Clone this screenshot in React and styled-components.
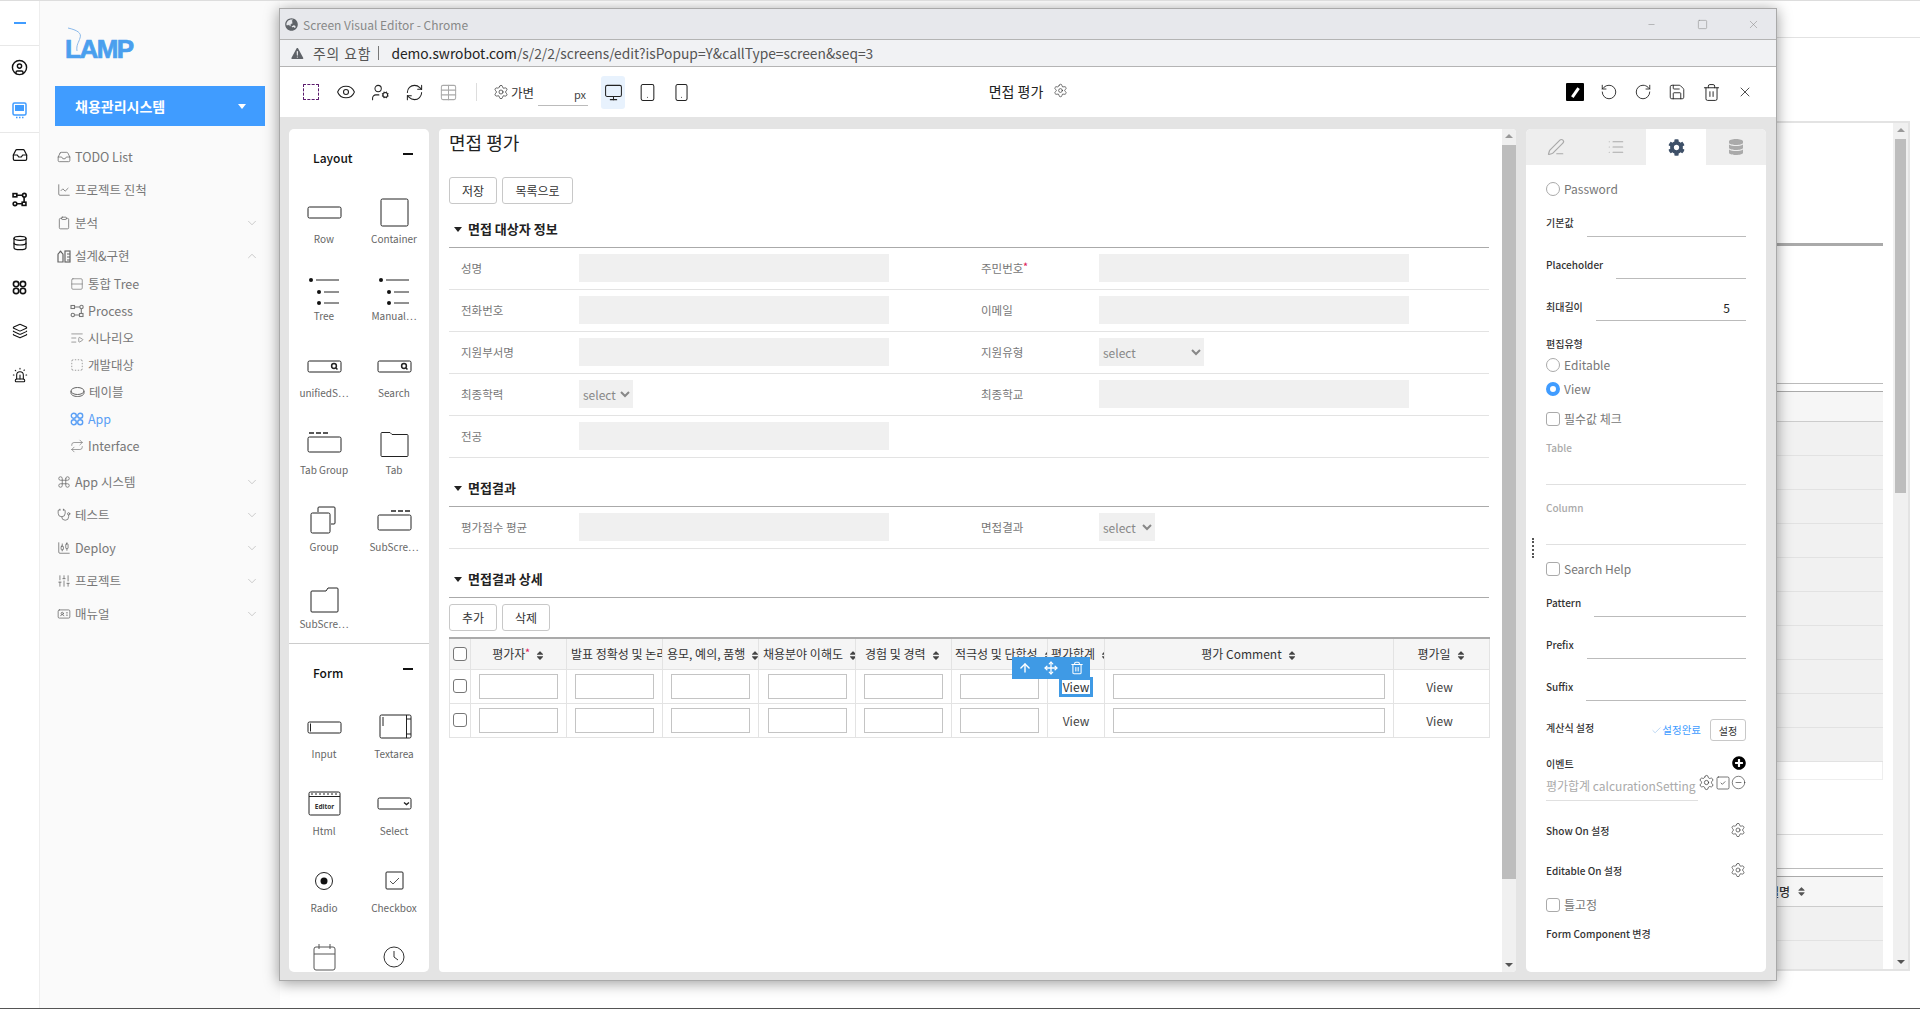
import React from "react";
import styled, { createGlobalStyle } from "styled-components";
import {
  CircleUser, Inbox, Database, Layers, Siren, ChartLine, Clipboard, Rows2,
  ListVideo, SquareDashed, Repeat, Command, Stethoscope, ChartCandlestick, SlidersVertical, IdCard,
  ChevronDown, ChevronUp, Eye, UserCog, RefreshCw, Table, Settings, Monitor, Tablet, Smartphone,
  RotateCcw, RotateCw, Save, Trash2, X, Minus, Square, ArrowUp, Move, SquareCheck, CircleMinus,
  PenLine, List, Check,
} from "lucide-react";
import { FaCog, FaDatabase, FaGlobeAsia, FaSort, FaPlusCircle } from "react-icons/fa";
import { IoWarning } from "react-icons/io5";

const FONT = `"Noto Sans CJK KR", "Noto Sans", sans-serif`;

const GlobalStyle = createGlobalStyle`
  html, body { margin: 0; padding: 0; height: 1009px; overflow: hidden; background: #fff; }
  body { font-family: ${FONT}; color: #333; }
  * { box-sizing: border-box; }
  input, select, button { font-family: ${FONT}; }
`;

const Page = styled.div`
  position: relative;
  display: flex;
  width: 1920px;
  height: 1009px;
  border-top: 1px solid #ddd;
  border-bottom: 1px solid #555;
  overflow: hidden;
`;

/* left icon rail */
const Rail = styled.nav`
  width: 40px;
  flex: none;
  border-right: 1px solid #eee;
  background: #fff;
`;
const RailTop = styled.div`
  height: 45px;
  display: flex;
  align-items: center;
  justify-content: center;
  border-bottom: 1px solid #e8e8e8;
`;
const RailDash = styled.span`
  width: 12px;
  height: 2px;
  background: #409cff;
`;
const RailGroup = styled.div`
  height: 87px;
  border-bottom: 1px solid #e8e8e8;
`;
const RailItem = styled.div`
  height: ${(p) => (p.$tall ? 44 : 43)}px;
  display: flex;
  align-items: center;
  justify-content: center;
  color: ${(p) => (p.$active ? "#409cff" : "#111")};
`;

/* sidebar */
const Sidebar = styled.aside`
  width: 240px;
  flex: none;
  background: #fafafa;
`;
const LogoRow = styled.div`
  height: 85px;
  padding: 26px 0 0 25px;
`;
const Logo = styled.div`
  position: relative;
  width: 72px;
  height: 36px;
  padding-top: 9px;
  font: 900 26px/26px "Liberation Sans", sans-serif;
  letter-spacing: -1.5px;
  color: #4a9fee;
  -webkit-text-stroke: 0.7px #4a9fee;
  svg { position: absolute; left: 0; top: 0; }
`;
const SystemButton = styled.div`
  height: 40px;
  margin: 0 15px;
  padding: 0 19px 0 20px;
  display: flex;
  align-items: center;
  justify-content: space-between;
  background: #409cff;
  color: #fff;
  font-size: 14px;
  font-weight: 700;
`;
const Caret = styled.span`
  border-left: 4px solid transparent;
  border-right: 4px solid transparent;
  border-top: 5px solid #fff;
`;
const Menu = styled.div`
  margin-top: 14px;
`;
const MenuRow = styled.div`
  height: 33px;
  padding: 0 21px 0 17px;
  display: flex;
  align-items: center;
  gap: 4px;
  font-size: 12.5px;
  color: #777;
  svg:first-child { flex: none; color: #666; }
  span { flex: 1; }
`;
const SubMenu = styled.div`
  margin-top: -2px;
  padding-bottom: 6px;
`;
const SubRow = styled.div`
  height: 27px;
  padding-left: 30px;
  display: flex;
  align-items: center;
  gap: 4px;
  font-size: 12.5px;
  color: ${(p) => (p.$active ? "#5a9ff5" : "#777")};
  svg { flex: none; }
`;

/* page behind the popup */
const Main = styled.main`
  flex: 1;
  min-width: 0;
`;
const MainTop = styled.div`
  height: 37px;
  border-bottom: 1px solid #e2e2e2;
`;
const BackBox = styled.div`
  display: flex;
  height: 850px;
  margin: 83px 10px 0 0;
  border: 2px solid #e3e3e3;
  border-left: 0;
`;
const BackContent = styled.div`
  flex: 1;
  padding: 120px 10px 0 0;
  overflow: hidden;
`;
const BackRule = styled.div`
  height: ${(p) => p.$h || 1}px;
  margin-top: ${(p) => p.$top || 0}px;
  background: ${(p) => p.$color || "#bbb"};
`;
const BackHead = styled.div`
  height: 31px;
  padding-left: 1488px;
  display: flex;
  align-items: center;
  gap: 6px;
  background: #f6f6f6;
  border-top: 1px solid #aaa;
  border-bottom: 1px solid #ccc;
  font-size: 12px;
  font-weight: 500;
  svg { width: 11px; height: 11px; color: #555; }
`;
const BackRow = styled.div`
  height: 34px;
  background: #f1f1f1;
  border-bottom: 1px solid #e2e2e2;
`;
const WhiteRow = styled.div`
  height: 18px;
  border-bottom: 1px solid #eee;
  border-right: 1px solid #eee;
`;
const ScrollTrack = styled.div`
  position: relative;
  width: ${(p) => p.$w || 15}px;
  flex: none;
  padding: 16px ${(p) => p.$pad || 0}px;
  background: #f0f0f0;
`;
const ScrollThumb = styled.div`
  height: ${(p) => p.$h}px;
  background: #bdbdbd;
`;
const ScrollArrow = styled.span`
  position: absolute;
  left: 50%;
  margin-left: -4px;
  ${(p) => (p.$down ? "bottom: 5px;" : "top: 5px;")}
  border-left: 4px solid transparent;
  border-right: 4px solid transparent;
  ${(p) => (p.$down ? "border-top: 4px solid #555;" : "border-bottom: 4px solid #999;")}
`;

/* popup window */
const PopupWindow = styled.section`
  position: absolute;
  left: 279px;
  top: 7px;
  width: 1498px;
  height: 973px;
  display: flex;
  flex-direction: column;
  border: 1px solid #a9a9a9;
  background: #e4e4e4;
  box-shadow: 0 2px 14px rgba(0, 0, 0, 0.4);
`;
const TitleBar = styled.div`
  height: 31px;
  flex: none;
  padding-left: 5px;
  display: flex;
  align-items: center;
  gap: 5px;
  background: #e7e8ec;
  border-bottom: 1px solid #b4b4b4;
  color: #888;
  svg { flex: none; }
`;
const TitleText = styled.span`
  flex: 1;
  font-size: 12px;
  color: #888;
`;
const WindowButton = styled.span`
  width: 46px;
  display: flex;
  justify-content: center;
  color: #888;
`;
const AddressBar = styled.div`
  height: 27px;
  flex: none;
  padding-left: 10px;
  display: flex;
  align-items: center;
  background: #f1f2f4;
  border-bottom: 1px solid #b4b4b4;
  font-size: 13.8px;
  color: #555;
`;
const Warn = styled.span`
  display: flex;
  margin-right: 8px;
  color: #5f6368;
`;
const WarnText = styled.span`
  letter-spacing: 0.9px;
`;
const AddressDivider = styled.span`
  width: 1px;
  height: 14px;
  margin: 0 12px 0 7px;
  background: #777;
`;
const UrlHost = styled.span`
  color: #222;
`;
const Toolbar = styled.div`
  height: 51px;
  flex: none;
  padding: 0 14px 0 15px;
  display: flex;
  align-items: center;
  background: #fff;
  border-bottom: 1px solid #e4e4e4;
`;
const ToolSide = styled.div`
  flex: 1;
  display: flex;
  align-items: center;
  justify-content: ${(p) => (p.$right ? "flex-end" : "flex-start")};
`;
const ToolButton = styled.span`
  width: 34px;
  height: 34px;
  display: flex;
  align-items: center;
  justify-content: center;
  color: ${(p) => p.$color || "#222"};
`;
const DashedBox = styled.span`
  width: 16px;
  height: 16px;
  margin-left: -2px;
  border: 1px dashed #5a1a6c;
  border-radius: 1px;
`;
const ToolDivider = styled.span`
  width: 1px;
  height: 18px;
  margin: 0 16px 0 11px;
  background: #ddd;
`;
const SizeLabel = styled.span`
  display: flex;
  align-items: center;
  gap: 2px;
  font-size: 12.5px;
  color: #333;
`;
const SizeInput = styled.span`
  width: 50px;
  height: 24px;
  margin: 4px 8px 0 4px;
  padding-right: 2px;
  display: flex;
  align-items: center;
  justify-content: flex-end;
  border-bottom: 1px solid #bbb;
  font-size: 11px;
  color: #444;
`;
const DeviceButton = styled.span`
  width: 24px;
  height: 33px;
  margin: 0 5px;
  border-radius: 3px;
  display: flex;
  align-items: center;
  justify-content: center;
  background: ${(p) => (p.$active ? "#e8f2fd" : "transparent")};
  color: #222;
`;
const ToolTitle = styled.div`
  display: flex;
  align-items: center;
  gap: 10px;
  margin-top: -3px;
  font-size: 14px;
  color: #222;
`;
const PencilSquare = styled.span`
  width: 18px;
  height: 18px;
  display: flex;
  align-items: center;
  justify-content: center;
  background: #000;
  border-radius: 1px;
  i {
    width: 2.5px;
    height: 11px;
    background: #fff;
    transform: rotate(35deg);
  }
`;

const Workspace = styled.div`
  flex: 1;
  min-height: 0;
  padding: 11px 10px 8px 9px;
  display: flex;
  gap: 10px;
`;

/* component palette */
const Palette = styled.div`
  width: 140px;
  flex: none;
  background: #fff;
  border-radius: 5px;
  overflow: hidden;
`;
const PaletteSection = styled.div`
  border-bottom: ${(p) => (p.$line ? "1px solid #ccc" : "0")};
`;
const PaletteHead = styled.div`
  height: 63px;
  padding: 0 16px 7px 24px;
  display: flex;
  align-items: center;
  justify-content: space-between;
  font-size: 12px;
  font-weight: 500;
  color: #111;
  i {
    width: 10px;
    height: 2px;
    margin-top: -6px;
    background: #111;
  }
`;
const PaletteGrid = styled.div`
  display: grid;
  grid-template-columns: 70px 70px;
  grid-auto-rows: 77px;
  ${(p) => (p.$h ? `height: ${p.$h}px;` : "")}
`;
const PaletteItem = styled.div`
  display: flex;
  flex-direction: column;
  align-items: center;
  font-size: 10px;
  color: #666;
  white-space: nowrap;
`;
const GlyphBox = styled.div`
  height: 40px;
  display: flex;
  align-items: center;
  justify-content: center;
`;
const PaletteLabel = styled.div`
  height: 16px;
  margin-top: -1px;
  line-height: 16px;
`;

const glyphs = {
  row: <rect x="1" y="12" width="33" height="11" rx="1.5" />,
  container: <rect x="4" y="4" width="27" height="27" rx="1.5" />,
  tree: (
    <g>
      <circle cx="4" cy="8" r="2" fill="#111" stroke="none" />
      <path d="M9 8h23M17 20h15" />
      <circle cx="12" cy="20" r="2" fill="#111" stroke="none" />
      <circle cx="12" cy="31" r="2" fill="#111" stroke="none" />
      <path d="M17 31h15" />
    </g>
  ),
  search: (
    <g>
      <rect x="1" y="12" width="33" height="11" rx="1.5" />
      <circle cx="27" cy="17" r="2.4" strokeWidth="1.5" />
      <path d="M29 19l1.5 1.5" strokeWidth="1.5" />
    </g>
  ),
  tabGroup: (
    <g>
      <path d="M2 7h5M9 7h5M16 7h5" strokeWidth="1.6" />
      <rect x="1" y="11" width="33" height="15" rx="1.5" />
    </g>
  ),
  tab: <path d="M4 7.5a1 1 0 0 1 1-1h8l2 2h15a1 1 0 0 1 1 1v20a1 1 0 0 1-1 1H5a1 1 0 0 1-1-1z" />,
  group: (
    <g>
      <path d="M11 9V5a1 1 0 0 1 1-1h15a1 1 0 0 1 1 1v15a1 1 0 0 1-1 1h-3" />
      <rect x="4" y="10" width="19" height="20" rx="1.5" />
    </g>
  ),
  subTab: (
    <g>
      <path d="M14 8h5M21 8h5M28 8h5" strokeWidth="1.6" />
      <rect x="1" y="12" width="33" height="15" rx="1.5" />
    </g>
  ),
  subFolder: <path d="M4 12a1 1 0 0 1 1-1h14l2-3h9a1 1 0 0 1 1 1v22a1 1 0 0 1-1 1H5a1 1 0 0 1-1-1z" />,
  input: (
    <g>
      <rect x="1" y="12" width="33" height="11" rx="1.5" />
      <path d="M3.5 13.5v8" />
    </g>
  ),
  textarea: (
    <g>
      <rect x="3" y="5" width="31" height="23" rx="1.5" />
      <path d="M29.5 5v23M29.5 9h4.500M29.500 24h4.500M6 7v9" />
    </g>
  ),
  html: (
    <g>
      <rect x="2" y="5" width="31" height="23" rx="1.5" />
      <path d="M2 9.500h31" />
      <path d="M4 7h28" strokeDasharray="2 2" />
    </g>
  ),
  select: (
    <g>
      <rect x="1" y="11" width="33" height="11" rx="1.500" />
      <path d="M27 15.500l2.500 2 2.500-2" strokeWidth="1.400" />
    </g>
  ),
  radio: (
    <g>
      <circle cx="17" cy="17" r="8.500" />
      <circle cx="17" cy="17" r="3.500" fill="#111" stroke="none" />
    </g>
  ),
  checkbox: (
    <g>
      <rect x="9" y="8" width="17" height="17" rx="1" />
      <path d="M13 17l3 3 6-6" stroke="#555" />
    </g>
  ),
  date: (
    <g stroke="#555">
      <rect x="7" y="6" width="21" height="23" rx="2" />
      <path d="M7 13h21M12 3v5M23 3v5" />
    </g>
  ),
  time: (
    <g stroke="#333">
      <circle cx="17" cy="16" r="10" />
      <path d="M17 10v6l4 3" />
    </g>
  ),
};

const Glyph = ({ kind }) => (
  <GlyphBox>
    <svg width="35" height="35" viewBox="0 0 35 35" fill="none" stroke="#222" strokeWidth="1">
      {glyphs[kind]}
      {kind === "html" && (
        <text x="17.500" y="22" textAnchor="middle" fontSize="6.500" fontWeight="700" stroke="none" fill="#333" fontFamily="Noto Sans, sans-serif">
          Editor
        </text>
      )}
    </svg>
  </GlyphBox>
);

const layoutItems = [
  ["row", "Row"], ["container", "Container"], ["tree", "Tree"], ["tree", "Manual⋯"],
  ["search", "unifiedS⋯"], ["search", "Search"], ["tabGroup", "Tab Group"], ["tab", "Tab"],
  ["group", "Group"], ["subTab", "SubScre⋯"], ["subFolder", "SubScre⋯"],
];
const formItems = [
  ["input", "Input"], ["textarea", "Textarea"], ["html", "Html"], ["select", "Select"],
  ["radio", "Radio"], ["checkbox", "Checkbox"], ["date"], ["time"],
];

/* center editor */
const Editor = styled.div`
  flex: 1;
  min-width: 0;
  display: flex;
  background: #fff;
  border-radius: 4px;
  overflow: hidden;
`;
const EditorBody = styled.div`
  flex: 1;
  min-width: 0;
  padding: 0 13px 0 10px;
`;
const PageTitle = styled.h1`
  margin: 0;
  height: 26px;
  font-size: 18px;
  font-weight: 400;
  line-height: 26px;
  color: #222;
`;
const Buttons = styled.div`
  display: flex;
  gap: 5px;
  margin-top: ${(p) => p.$top}px;
`;
const Btn = styled.button`
  height: 27px;
  width: ${(p) => p.$w}px;
  padding: 0;
  background: #fff;
  border: 1px solid #c8c8c8;
  border-radius: 3px;
  font-size: 12px;
  color: #333;
`;
const SectionHead = styled.h2`
  margin: 0;
  padding: ${(p) => (p.$first ? 16 : 21)}px 0 9px 5px;
  display: flex;
  align-items: center;
  gap: 6px;
  border-bottom: 1px solid #aaa;
  font-size: 13px;
  font-weight: 700;
  line-height: 18px;
  color: #222;
  &::before {
    content: "";
    border-left: 4px solid transparent;
    border-right: 4px solid transparent;
    border-top: 5px solid #222;
  }
`;
const FormRow = styled.div`
  height: 42px;
  display: flex;
  align-items: center;
  border-bottom: 1px solid #e3e3e3;
  padding-bottom: 1px;
`;
const Field = styled.div`
  width: 520px;
  flex: none;
  display: grid;
  grid-template-columns: 130px 310px;
  align-items: center;
`;
const FieldLabel = styled.label`
  padding-left: 12px;
  font-size: 11.5px;
  color: #777;
  b {
    color: #e0245e;
    font-weight: 700;
    font-size: 9px;
    vertical-align: 3px;
  }
`;
const GrayInput = styled.input`
  height: 28px;
  width: 100%;
  border: 0;
  outline: 0;
  background: #f0f0f0;
`;
const GraySelect = styled.select`
  height: 28px;
  width: ${(p) => p.$w}px;
  border: 0;
  outline: 0;
  background-color: #f0f0f0;
  font-size: 12px;
  color: #888;
`;

const GridTable = styled.table`
  width: 1040px;
  margin: 6px 0 0 0;
  border-collapse: collapse;
  table-layout: fixed;
`;
const Col = styled.col`
  width: ${(p) => p.$w}px;
`;
const Th = styled.th`
  height: 31px;
  padding: 0 0 0 ${(p) => p.$pad || 0}px;
  background: #f5f5f5;
  border: 1px solid #e3e3e3;
  border-top: 2px solid #aaa;
  font-size: 12px;
  font-weight: 400;
  color: #333;
  white-space: nowrap;
  overflow: hidden;
  text-align: ${(p) => (p.$left ? "left" : "center")};
  b {
    color: #e0245e;
    font-size: 9px;
    vertical-align: 3px;
  }
  svg {
    width: 10px;
    height: 11px;
    margin-left: 5px;
    vertical-align: -1.5px;
    color: #444;
  }
`;
const Td = styled.td`
  position: relative;
  height: 34px;
  padding: 0 ${(p) => p.$endPad || 0}px 0 0;
  border: 1px solid #e3e3e3;
  text-align: center;
  font-size: 12px;
  color: #444;
`;
const CellInput = styled.input`
  display: block;
  width: ${(p) => p.$w || 79}px;
  height: 25px;
  margin: 0 auto;
  border: 1px solid #c4c4c4;
  outline: 0;
  background: #fff;
`;
const Check14 = styled.input.attrs({ type: "checkbox" })`
  appearance: none;
  display: block;
  width: 14px;
  height: 14px;
  margin: ${(p) => (p.$flat ? "0" : "0 auto")};
  border: 1px solid ${(p) => (p.$flat ? "#aaa" : "#777")};
  border-radius: 3px;
  background: #fff;
  flex: none;
`;
const SelectToolbar = styled.div`
  position: absolute;
  left: -36px;
  top: -13px;
  width: 78px;
  height: 22px;
  display: flex;
  align-items: center;
  justify-content: space-around;
  background: #3f9ae5;
  color: #fff;
  z-index: 2;
`;
const SelectedText = styled.span`
  position: relative;
  z-index: 1;
  display: inline-block;
  padding: 0 1px;
  height: 14px;
  line-height: 14px;
  background: #fff;
  outline: 3px solid #3f9ae5;
  color: #333;
`;

/* property panel */
const Props = styled.div`
  position: relative;
  width: 240px;
  flex: none;
  background: #fff;
  border-radius: 5px;
  overflow: hidden;
`;
const TabRow = styled.div`
  height: 36px;
  display: flex;
  background: #eee;
`;
const PropTab = styled.div`
  flex: 1;
  display: flex;
  align-items: center;
  justify-content: center;
  background: ${(p) => (p.$active ? "#fff" : "transparent")};
  color: ${(p) => (p.$active ? "#3e5068" : "#aaa")};
`;
const Dots = styled.span`
  position: absolute;
  left: 6px;
  top: 409px;
  width: 2px;
  height: 20px;
  border-left: 2px dotted #555;
`;
const PropBody = styled.div`
  height: 789px;
  padding: 14px 20px 0;
  overflow: hidden;
`;
const OptionRow = styled.label`
  height: 20px;
  margin-top: ${(p) => p.$top || 0}px;
  display: flex;
  align-items: center;
  gap: 4px;
  font-size: 12px;
  color: #777;
  span { margin-top: -2px; }
`;
const Radio = styled.input.attrs({ type: "radio" })`
  appearance: none;
  width: 14px;
  height: 14px;
  margin: 0;
  flex: none;
  border-radius: 50%;
  border: 1px solid #aaa;
  background: #fff;
  &:checked {
    border: 4px solid #409cff;
  }
`;
const InputRow = styled.div`
  height: 26px;
  margin-top: ${(p) => p.$top ?? 16}px;
  display: flex;
  align-items: flex-start;
  gap: 13px;
  line-height: 23px;
`;
const PropLabel = styled.span`
  flex: none;
  font-size: 10px;
  font-weight: 500;
  color: ${(p) => (p.$muted ? "#aaa" : "#333")};
`;
const LineInput = styled.div`
  flex: 1;
  height: 26px;
  padding-right: 16px;
  line-height: 26px;
  border-bottom: 1px solid #bbb;
  text-align: right;
  font-size: 12px;
  color: #222;
`;
const BlockLabel = styled.div`
  height: 16px;
  line-height: ${(p) => p.$lh || 12}px;
  margin-top: ${(p) => p.$top}px;
`;
const BlockLine = styled.div`
  height: 29px;
  border-bottom: 1px solid #e0e0e0;
`;
const CalcRow = styled.div`
  height: 22px;
  margin-top: 18px;
  display: flex;
  align-items: center;
  line-height: 18px;
  ${PropLabel} { align-self: flex-start; }
`;
const Done = styled.span`
  margin-left: auto;
  margin-right: 9px;
  display: flex;
  align-items: center;
  font-size: 10.5px;
  color: #409cff;
`;
const SmallBtn = styled.button`
  width: 36px;
  height: 22px;
  padding: 0;
  background: #fff;
  border: 1px solid #c8c8c8;
  border-radius: 3px;
  font-size: 10px;
  color: #333;
`;
const EventHead = styled.div`
  height: 16px;
  margin-top: 14px;
  display: flex;
  align-items: center;
  justify-content: space-between;
  svg { color: #000; }
`;
const EventRow = styled.div`
  height: 30px;
  display: flex;
  align-items: flex-start;
`;
const EventInput = styled.div`
  width: 152px;
  height: 30px;
  line-height: 30px;
  border-bottom: 1px solid #e0e0e0;
  font-size: 12px;
  color: #aaa;
  white-space: nowrap;
  overflow: hidden;
`;
const EventIcons = styled.div`
  flex: 1;
  padding-top: 3px;
  display: flex;
  justify-content: flex-end;
  align-items: center;
  color: #333;
`;
const SettingRow = styled.div`
  height: 20px;
  margin-top: ${(p) => p.$top}px;
  display: flex;
  align-items: center;
  justify-content: space-between;
  svg { color: #333; }
`;

const columns = [21, 96, 96, 96, 97, 96, 96, 57, 289, 96];

const I = ({ as: Comp, size = 14, sw = 1.5, ...rest }) => <Comp size={size} strokeWidth={sw} {...rest} />;

const GridCircles = ({ size = 14, color = "currentColor", sw = 1.4 }) => (
  <svg width={size} height={size} viewBox="0 0 14 14" fill="none" stroke={color} strokeWidth={sw}>
    <circle cx="3.800" cy="3.800" r="2.500" />
    <circle cx="10.200" cy="3.800" r="2.500" />
    <circle cx="3.800" cy="10.200" r="2.500" />
    <circle cx="10.200" cy="10.200" r="2.500" />
  </svg>
);
const OvalIcon = () => (
  <svg width="15" height="14" viewBox="0 0 15 14" fill="none" stroke="#666" strokeWidth="1">
    <ellipse cx="7.500" cy="6" rx="6.500" ry="3.500" />
    <path d="M1 6v2c0 2 3 3.500 6.500 3.500S14 10 14 8V6" />
  </svg>
);
const FlowNodes = ({ size = 14, sw = 1.3 }) => (
  <svg width={size} height={size} viewBox="0 0 14 14" fill="none" stroke="currentColor" strokeWidth={sw}>
    <rect x="1" y="1.500" width="3.500" height="3" />
    <circle cx="11.500" cy="3" r="1.700" />
    <circle cx="2.800" cy="11" r="1.700" />
    <rect x="9.500" y="9.500" width="3.500" height="3" />
    <path d="M4.500 3h5.300M4.500 11h5M11.300 4.700v4.800" />
  </svg>
);
const BookScreen = () => (
  <svg width="15" height="17" viewBox="0 0 15 17" fill="none" stroke="#409cff" strokeWidth="1.500">
    <rect x="1" y="1" width="13" height="12" rx="1.500" />
    <rect x="3" y="3" width="9" height="6" fill="#409cff" stroke="none" />
    <path d="M4 15.500h1.500M7 15.500h1.500M10 15.500h1.500" />
  </svg>
);
const TwoColumns = () => (
  <svg width="14" height="14" viewBox="0 0 14 14" fill="none" stroke="#666" strokeWidth="1.200">
    <path d="M1 5.500c0-1 1-1.500 1.500-2S3 2 3.500 2 4 3 4.500 3.500 6 4.500 6 5.500V13H1z" />
    <rect x="8" y="2" width="5" height="11" />
    <path d="M10 5h3M10 8h3M10 11h3" />
  </svg>
);

const topMenu = [
  [Inbox, "TODO List", false],
  [ChartLine, "프로젝트 진척", false],
  [Clipboard, "분석", "down"],
];
const subMenu = [[Rows2, "통합 Tree"]];
const subMenuRest = [[ListVideo, "시나리오"], [SquareDashed, "개발대상"]];
const lowerMenu = [
  [Command, "App 시스템"], [Stethoscope, "테스트"], [ChartCandlestick, "Deploy"],
  [SlidersVertical, "프로젝트"], [IdCard, "매뉴얼"],
];

function SideNav() {
  return (
    <Sidebar>
      <LogoRow>
        <Logo>
          LAMP
          <svg width="40" height="26" viewBox="0 0 40 26" fill="none">
            <path d="M3 1c8 1 12 5 10 10-1 4-5 7-4 14" stroke="#fafafa" strokeWidth="3" />
            <path d="M3 1c9 2 14 5 12 10-1 4-4 7-3 13" stroke="#8ab9ea" strokeWidth="1" />
          </svg>
        </Logo>
      </LogoRow>
      <SystemButton>
        채용관리시스템
        <Caret />
      </SystemButton>
      <Menu>
        {topMenu.map(([Icon, label, chevron]) => (
          <MenuRow key={label}>
            <I as={Icon} size={14} sw={1.3} />
            <span>{label}</span>
            {chevron === "down" && <I as={ChevronDown} size={14} sw={1} color="#aaa" />}
          </MenuRow>
        ))}
        <MenuRow>
          <TwoColumns />
          <span>설계&amp;구현</span>
          <I as={ChevronUp} size={14} sw={1} color="#aaa" />
        </MenuRow>
        <SubMenu>
          {subMenu.map(([Icon, label]) => (
            <SubRow key={label}>
              <I as={Icon} size={14} sw={1.2} />
              {label}
            </SubRow>
          ))}
          <SubRow>
            <FlowNodes sw={1.1} />
            Process
          </SubRow>
          {subMenuRest.map(([Icon, label]) => (
            <SubRow key={label}>
              <I as={Icon} size={14} sw={1.2} />
              {label}
            </SubRow>
          ))}
          <SubRow>
            <OvalIcon />
            테이블
          </SubRow>
          <SubRow $active>
            <GridCircles color="#5a9ff5" />
            App
          </SubRow>
          <SubRow>
            <I as={Repeat} size={14} sw={1.2} />
            Interface
          </SubRow>
        </SubMenu>
        {lowerMenu.map(([Icon, label]) => (
          <MenuRow key={label}>
            <I as={Icon} size={14} sw={1.3} />
            <span>{label}</span>
            <I as={ChevronDown} size={14} sw={1} color="#aaa" />
          </MenuRow>
        ))}
      </Menu>
    </Sidebar>
  );
}

function Backdrop() {
  return (
    <Main>
      <MainTop />
      <BackBox>
        <BackContent>
          <BackRule $h={3} $color="#aaa" />
          <BackRule $top={137} />
          <BackRule $top={6} $color="transparent" />
          <BackHead />
          {Array.from({ length: 10 }, (_, i) => <BackRow key={i} />)}
          <WhiteRow />
          <BackRule $top={54} $color="#ddd" />
          <BackRule $top={33} />
          <BackRule $top={6} $color="transparent" />
          <BackHead>
            설명
            <FaSort />
          </BackHead>
          <BackRow />
          <BackRow />
        </BackContent>
        <ScrollTrack $pad={2}>
          <ScrollArrow />
          <ScrollThumb $h={354} />
          <ScrollArrow $down />
        </ScrollTrack>
      </BackBox>
    </Main>
  );
}

function EditorToolbar() {
  return (
    <Toolbar>
      <ToolSide>
        <ToolButton><DashedBox /></ToolButton>
        <ToolButton><I as={Eye} size={20} sw={1.3} /></ToolButton>
        <ToolButton><I as={UserCog} size={19} sw={1.3} /></ToolButton>
        <ToolButton><I as={RefreshCw} size={19} sw={1.3} /></ToolButton>
        <ToolButton $color="#aaa"><I as={Table} size={19} sw={1.3} /></ToolButton>
        <ToolDivider />
        <SizeLabel>
          <I as={Settings} size={16} sw={1.1} />
          가변
        </SizeLabel>
        <SizeInput>px</SizeInput>
        <DeviceButton $active><I as={Monitor} size={19} sw={1.3} /></DeviceButton>
        <DeviceButton><I as={Tablet} size={19} sw={1.3} /></DeviceButton>
        <DeviceButton><I as={Smartphone} size={19} sw={1.3} /></DeviceButton>
      </ToolSide>
      <ToolTitle>
        면접 평가
        <I as={Settings} size={15} sw={1} />
      </ToolTitle>
      <ToolSide $right>
        <ToolButton><PencilSquare><i /></PencilSquare></ToolButton>
        <ToolButton><I as={RotateCcw} size={18} sw={1.2} /></ToolButton>
        <ToolButton><I as={RotateCw} size={18} sw={1.2} /></ToolButton>
        <ToolButton><I as={Save} size={18} sw={1.2} /></ToolButton>
        <ToolButton><I as={Trash2} size={19} sw={1.2} /></ToolButton>
        <ToolButton><I as={X} size={16} sw={1.2} /></ToolButton>
      </ToolSide>
    </Toolbar>
  );
}

function PalettePanel() {
  return (
    <Palette>
      <PaletteSection $line>
        <PaletteHead>Layout<i /></PaletteHead>
        <PaletteGrid $h={451}>
          {layoutItems.map(([kind, label], i) => (
            <PaletteItem key={i}>
              <Glyph kind={kind} />
              <PaletteLabel>{label}</PaletteLabel>
            </PaletteItem>
          ))}
        </PaletteGrid>
      </PaletteSection>
      <PaletteSection>
        <PaletteHead>Form<i /></PaletteHead>
        <PaletteGrid>
          {formItems.map(([kind, label]) => (
            <PaletteItem key={kind}>
              <Glyph kind={kind} />
              {label && <PaletteLabel>{label}</PaletteLabel>}
            </PaletteItem>
          ))}
        </PaletteGrid>
      </PaletteSection>
    </Palette>
  );
}

const InputField = ({ label, req }) => (
  <Field>
    <FieldLabel>{label}{req && <b>*</b>}</FieldLabel>
    <GrayInput readOnly />
  </Field>
);
const SelectField = ({ label, w }) => (
  <Field>
    <FieldLabel>{label}</FieldLabel>
    <GraySelect $w={w}><option>select</option></GraySelect>
  </Field>
);

function ResultRow({ selected }) {
  return (
    <tr>
      <Td><Check14 /></Td>
      {[0, 1, 2, 3, 4, 5].map((i) => <Td key={i}><CellInput readOnly /></Td>)}
      <Td>
        {selected ? (
          <>
            <SelectToolbar>
              <I as={ArrowUp} size={14} sw={2.4} />
              <I as={Move} size={14} sw={2.2} />
              <I as={Trash2} size={14} sw={1.8} />
            </SelectToolbar>
            <SelectedText>View</SelectedText>
          </>
        ) : "View"}
      </Td>
      <Td><CellInput $w={272} readOnly /></Td>
      <Td $endPad={4}>View</Td>
    </tr>
  );
}

function EditorPanel() {
  return (
    <Editor>
      <EditorBody>
        <PageTitle>면접 평가</PageTitle>
        <Buttons $top={22}>
          <Btn $w={48}>저장</Btn>
          <Btn $w={71}>목록으로</Btn>
        </Buttons>

        <SectionHead $first>면접 대상자 정보</SectionHead>
        <FormRow><InputField label="성명" /><InputField label="주민번호" req /></FormRow>
        <FormRow><InputField label="전화번호" /><InputField label="이메일" /></FormRow>
        <FormRow><InputField label="지원부서명" /><SelectField label="지원유형" w={105} /></FormRow>
        <FormRow><SelectField label="최종학력" w={54} /><InputField label="최종학교" /></FormRow>
        <FormRow><InputField label="전공" /></FormRow>

        <SectionHead>면접결과</SectionHead>
        <FormRow><InputField label="평가점수 평균" /><SelectField label="면접결과" w={56} /></FormRow>

        <SectionHead>면접결과 상세</SectionHead>
        <Buttons $top={6}>
          <Btn $w={48}>추가</Btn>
          <Btn $w={48}>삭제</Btn>
        </Buttons>
        <GridTable>
          <colgroup>
            {columns.map((w, i) => <Col key={i} $w={w} />)}
          </colgroup>
          <thead>
            <tr>
              <Th><Check14 /></Th>
              <Th>평가자<b>*</b><FaSort /></Th>
              <Th $left $pad={4}>발표 정확성 및 논리성<FaSort /></Th>
              <Th $left $pad={4}>용모, 예의, 품행<FaSort /></Th>
              <Th $left $pad={4}>채용분야 이해도<FaSort /></Th>
              <Th $left $pad={9}>경험 및 경력<FaSort /></Th>
              <Th $left $pad={3}>적극성 및 단합성<FaSort /></Th>
              <Th $left $pad={3}>평가합계<FaSort /></Th>
              <Th>평가 Comment<FaSort /></Th>
              <Th>평가일<FaSort /></Th>
            </tr>
          </thead>
          <tbody>
            <ResultRow selected />
            <ResultRow />
          </tbody>
        </GridTable>
      </EditorBody>
      <ScrollTrack $w={14} $pad={0}>
        <ScrollArrow />
        <ScrollThumb $h={734} />
        <ScrollArrow $down />
      </ScrollTrack>
    </Editor>
  );
}

function PropsPanel() {
  return (
    <Props>
      <TabRow>
        <PropTab><I as={PenLine} size={18} sw={1.6} /></PropTab>
        <PropTab><I as={List} size={18} sw={1.4} /></PropTab>
        <PropTab $active><FaCog size={17} /></PropTab>
        <PropTab><FaDatabase size={16} /></PropTab>
      </TabRow>
      <Dots />
      <PropBody>
        <OptionRow><Radio name="pw" /><span>Password</span></OptionRow>
        <InputRow $top={12}><PropLabel>기본값</PropLabel><LineInput /></InputRow>
        <InputRow><PropLabel>Placeholder</PropLabel><LineInput /></InputRow>
        <InputRow><PropLabel>최대길이</PropLabel><LineInput>5</LineInput></InputRow>
        <BlockLabel $top={14}><PropLabel>편집유형</PropLabel></BlockLabel>
        <OptionRow $top={4}><Radio name="mode" /><span>Editable</span></OptionRow>
        <OptionRow $top={4}><Radio name="mode" defaultChecked /><span>View</span></OptionRow>
        <OptionRow $top={10}><Check14 $flat /><span>필수값 체크</span></OptionRow>
        <BlockLabel $top={11} $lh={10}><PropLabel $muted>Table</PropLabel></BlockLabel>
        <BlockLine />
        <BlockLabel $top={15} $lh={10}><PropLabel $muted>Column</PropLabel></BlockLabel>
        <BlockLine />
        <OptionRow $top={14}><Check14 $flat /><span>Search Help</span></OptionRow>
        <InputRow $top={12}><PropLabel>Pattern</PropLabel><LineInput /></InputRow>
        <InputRow><PropLabel>Prefix</PropLabel><LineInput /></InputRow>
        <InputRow><PropLabel>Suffix</PropLabel><LineInput /></InputRow>
        <CalcRow>
          <PropLabel>계산식 설정</PropLabel>
          <Done><I as={Check} size={11} sw={1.2} color="#8ab9ea" />설정완료</Done>
          <SmallBtn>설정</SmallBtn>
        </CalcRow>
        <EventHead>
          <PropLabel>이벤트</PropLabel>
          <FaPlusCircle size={14} />
        </EventHead>
        <EventRow>
          <EventInput>평가합계 calcurationSetting</EventInput>
          <EventIcons>
            <I as={Settings} size={17} sw={1} />
            <I as={SquareCheck} size={16} sw={1} />
            <I as={CircleMinus} size={15} sw={1} />
          </EventIcons>
        </EventRow>
        <SettingRow $top={19}>
          <PropLabel>Show On 설정</PropLabel>
          <I as={Settings} size={16} sw={1} />
        </SettingRow>
        <SettingRow $top={20}>
          <PropLabel>Editable On 설정</PropLabel>
          <I as={Settings} size={16} sw={1} />
        </SettingRow>
        <OptionRow $top={15}><Check14 $flat /><span>틀고정</span></OptionRow>
        <BlockLabel $top={11} $lh={10}><PropLabel>Form Component 변경</PropLabel></BlockLabel>
      </PropBody>
    </Props>
  );
}

export default function App() {
  return (
    <>
      <GlobalStyle />
      <Page>
        <Rail>
          <RailTop><RailDash /></RailTop>
          <RailGroup>
            <RailItem><I as={CircleUser} size={17} sw={2} /></RailItem>
            <RailItem $active><BookScreen /></RailItem>
          </RailGroup>
          <RailItem $tall><I as={Inbox} size={16} sw={1.8} /></RailItem>
          <RailItem $tall><FlowNodes size={15} sw={1.5} /></RailItem>
          <RailItem $tall><I as={Database} size={16} sw={1.8} /></RailItem>
          <RailItem $tall><GridCircles size={15} sw={1.5} /></RailItem>
          <RailItem $tall><I as={Layers} size={16} sw={1.6} /></RailItem>
          <RailItem $tall><I as={Siren} size={16} sw={1.6} /></RailItem>
        </Rail>
        <SideNav />
        <Backdrop />

        <PopupWindow>
          <TitleBar>
            <FaGlobeAsia size={13} color="#5f6368" />
            <TitleText>Screen Visual Editor - Chrome</TitleText>
            <WindowButton><I as={Minus} size={9} sw={1.4} /></WindowButton>
            <WindowButton><I as={Square} size={11} sw={1.2} /></WindowButton>
            <WindowButton><I as={X} size={13} sw={1} /></WindowButton>
          </TitleBar>
          <AddressBar>
            <Warn><IoWarning size={15} /></Warn>
            <WarnText>주의 요함</WarnText>
            <AddressDivider />
            <UrlHost>demo.swrobot.com</UrlHost>/s/2/2/screens/edit?isPopup=Y&amp;callType=screen&amp;seq=3
          </AddressBar>
          <EditorToolbar />
          <Workspace>
            <PalettePanel />
            <EditorPanel />
            <PropsPanel />
          </Workspace>
        </PopupWindow>
      </Page>
    </>
  );
}
